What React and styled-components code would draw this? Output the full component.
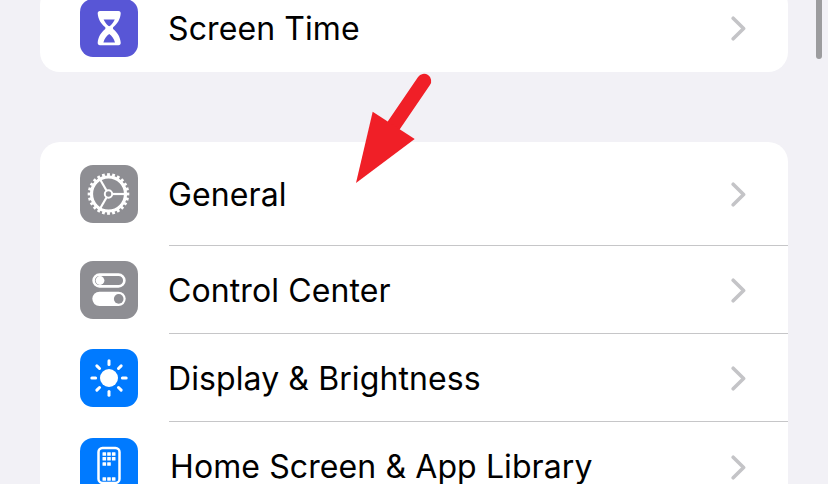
import React from 'react';
import styled, { createGlobalStyle } from 'styled-components';

const GlobalStyle = createGlobalStyle`
  html, body {
    margin: 0;
    padding: 0;
    height: 100%;
    overflow: hidden;
    background: #f2f1f6;
  }
`;

const Page = styled.div`
  position: relative;
  width: 828px;
  height: 484px;
  overflow: hidden;
  background: #f2f1f6;
  font-family: Inter, "Liberation Sans", sans-serif;
  color: #000;
`;

const Card = styled.div`
  margin: ${props => props.$first ? '-15px 40px 70px' : '0 40px'};
  background: #fff;
  border-radius: 20px;
  overflow: hidden;
`;

const Row = styled.div`
  display: flex;
  align-items: flex-start;
  padding-left: 40px;
  height: ${props => props.$height}px;
`;

const IconBox = styled.div`
  flex: none;
  width: 58px;
  height: 58px;
  margin-top: ${props => props.$top}px;
  border-radius: 13px;
  background: ${props => props.$color};
  svg {
    display: block;
  }
`;

const RowBody = styled.div`
  flex: 1;
  display: flex;
  align-items: flex-start;
  justify-content: space-between;
  margin-left: 31px;
  padding-right: 42px;
  height: 100%;
  box-sizing: border-box;
  border-bottom: ${props => props.$last ? 'none' : '1px solid #c6c6c8'};
`;

const Label = styled.span`
  margin-top: ${props => props.$top}px;
  margin-left: ${props => props.$indent || 0}px;
  font-size: 32px;
  line-height: 40px;
  letter-spacing: 0.1px;
  white-space: nowrap;
`;

const ChevronIcon = styled.svg`
  flex: none;
  width: 15px;
  height: 25px;
  margin-top: ${props => props.$top}px;
`;

const ScrollThumb = styled.div`
  position: absolute;
  top: -4px;
  left: 816px;
  width: 6px;
  height: 63px;
  border-radius: 3px;
  background: #9c9c9e;
`;

const Arrow = styled.svg`
  position: absolute;
  top: 0;
  left: 0;
  pointer-events: none;
`;

const Chevron = ({ top }) => (
  <ChevronIcon $top={top} viewBox="0 0 15 25">
    <path d="M2.2 2.2 L12.6 12.5 L2.2 22.8" fill="none" stroke="#c4c4c7" strokeWidth="3.6" strokeLinecap="round" strokeLinejoin="round" />
  </ChevronIcon>
);

const HourglassGlyph = () => (
  <svg width="58" height="58" viewBox="0 0 58 58">
    <path fillRule="evenodd" fill="#fff" d="M20 12 H38.5 C40 12 40.8 13 40.7 14.4 C40.3 20 37.4 24.6 33.4 28 C32.8 28.5 32.8 29.7 33.4 30.2 C37.4 33.6 40.3 38 40.7 43.5 C40.8 45.2 40 46.2 38.5 46.2 H20 C18.5 46.2 17.6 45.2 17.7 43.5 C18.1 38 21 33.6 25 30.2 C25.6 29.7 25.6 28.5 25 28 C21 24.6 18.1 20 17.7 14.4 C17.6 13 18.5 12 20 12 Z M23.6 20.4 C24.8 23 26.4 25.2 28.2 26.8 C28.8 27.3 29.6 27.3 30.2 26.8 C32 25.2 33.6 23 34.8 20.4 Z M29.2 35 C26.6 37 24.4 39.6 23.4 43.4 H35 C34 39.6 31.8 37 29.2 35 Z" />
  </svg>
);

const teeth = Array.from({ length: 24 }, (_, i) => i * 15);

const GearGlyph = () => (
  <svg width="58" height="58" viewBox="0 0 58 58">
    <circle cx="28.5" cy="29" r="17" fill="none" stroke="#fff" strokeWidth="3.2" />
    {teeth.map(angle => (
      <rect key={angle} x="27.1" y="8.2" width="2.8" height="4" fill="#fff" transform={`rotate(${angle} 28.5 29)`} />
    ))}
    {[90, 210, 330].map(angle => (
      <rect key={angle} x="27.4" y="12" width="2.2" height="13" fill="#fff" transform={`rotate(${angle} 28.5 29)`} />
    ))}
    <circle cx="28.5" cy="29" r="3.7" fill="none" stroke="#fff" strokeWidth="2" />
  </svg>
);

const TogglesGlyph = () => (
  <svg width="58" height="58" viewBox="0 0 58 58">
    <rect x="13.6" y="13.6" width="30.8" height="11.8" rx="5.9" fill="none" stroke="#fff" strokeWidth="2.6" />
    <circle cx="20" cy="19.5" r="4.4" fill="#fff" />
    <rect x="12.3" y="30.7" width="33.4" height="14.3" rx="7.15" fill="#fff" />
    <circle cx="38.7" cy="37.9" r="4.8" fill="#8e8e93" />
  </svg>
);

const SunGlyph = () => (
  <svg width="58" height="58" viewBox="0 0 58 58">
    <circle cx="29" cy="29" r="9" fill="#fff" />
    {[0, 45, 90, 135, 180, 225, 270, 315].map(angle => (
      <line key={angle} x1="29" y1="11.8" x2="29" y2="15.6" stroke="#fff" strokeWidth="3" strokeLinecap="round" transform={`rotate(${angle} 29 29)`} />
    ))}
  </svg>
);

const dots = [
  [24.3, 16], [29, 16], [33.7, 16],
  [24.3, 20.8], [29, 20.8], [33.7, 20.8],
  [24.3, 26], [29, 26],
  [24.3, 41], [29, 41], [33.7, 41],
];

const HomeGlyph = () => (
  <svg width="58" height="58" viewBox="0 0 58 58">
    <rect x="18.5" y="9.9" width="21" height="35" rx="4" fill="none" stroke="#fff" strokeWidth="2.5" />
    {dots.map(([x, y]) => (
      <rect key={`${x}-${y}`} x={x - 1.8} y={y - 1.8} width="3.6" height="3.6" rx="0.5" fill="#fff" />
    ))}
  </svg>
);

const SettingsRow = ({ height, iconTop, color, glyph, label, labelTop, indent, chevronTop, last }) => (
  <Row $height={height}>
    <IconBox $top={iconTop} $color={color}>{glyph}</IconBox>
    <RowBody $last={last}>
      <Label $top={labelTop} $indent={indent}>{label}</Label>
      <Chevron top={chevronTop} />
    </RowBody>
  </Row>
);

export default function App() {
  return (
    <Page>
      <GlobalStyle />
      <Card $first>
        <SettingsRow height={87} iconTop={14} color="#5856d6" glyph={<HourglassGlyph />} label="Screen Time" labelTop={24} indent={-1} chevronTop={31} last />
      </Card>
      <Card>
        <SettingsRow height={104} iconTop={23} color="#8e8e93" glyph={<GearGlyph />} label="General" labelTop={33} indent={-1} chevronTop={40} />
        <SettingsRow height={88} iconTop={15} color="#8e8e93" glyph={<TogglesGlyph />} label="Control Center" labelTop={25} indent={-1} chevronTop={32} />
        <SettingsRow height={88} iconTop={15} color="#007aff" glyph={<SunGlyph />} label="Display & Brightness" labelTop={25} indent={-1} chevronTop={32} />
        <SettingsRow height={88} iconTop={16} color="#007aff" glyph={<HomeGlyph />} label="Home Screen & App Library" labelTop={25} indent={1} chevronTop={33} last />
      </Card>
      <ScrollThumb />
      <Arrow width="828" height="484" viewBox="0 0 828 484">
        <path d="M424 81 L394 125" stroke="#f01f27" strokeWidth="14.4" strokeLinecap="round" fill="none" />
        <path d="M356 183 L372.7 111.7 L414.7 139 Z" fill="#f01f27" />
      </Arrow>
    </Page>
  );
}
